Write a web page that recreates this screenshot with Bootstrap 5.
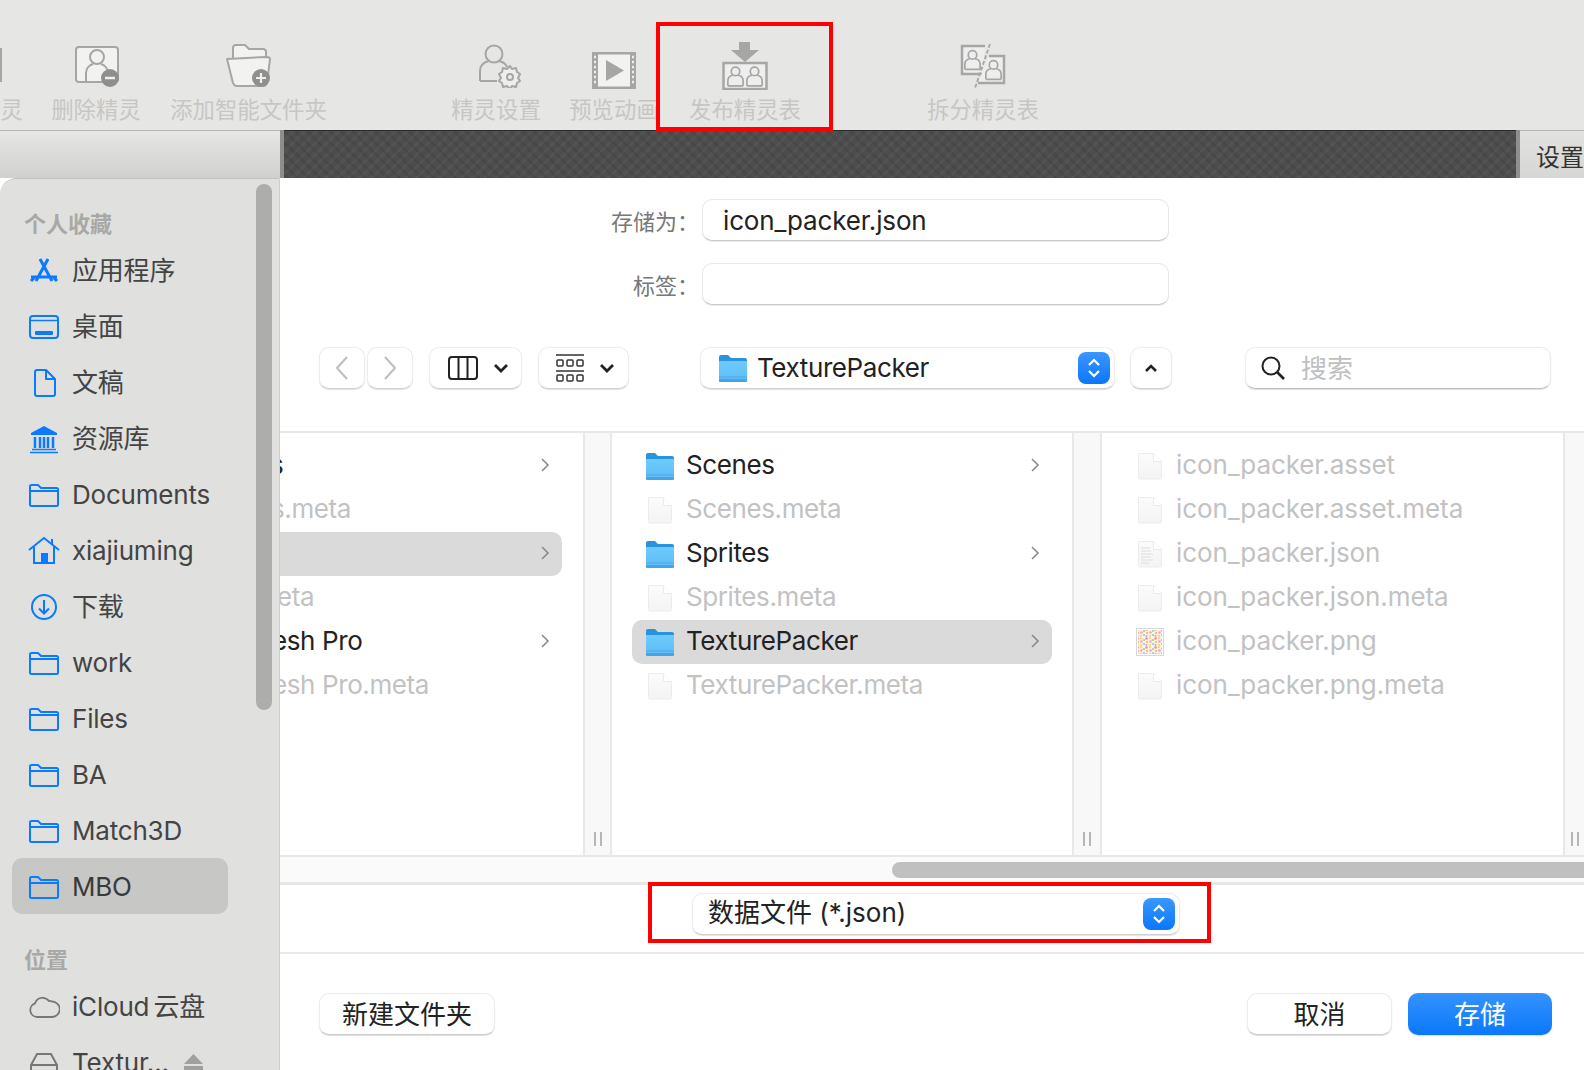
<!DOCTYPE html>
<html lang="zh">
<head>
<meta charset="utf-8">
<title>存储</title>
<link href="https://cdn.jsdelivr.net/npm/bootstrap@5.3.0/dist/css/bootstrap.min.css" rel="stylesheet">
<style>
html,body{margin:0;width:1584px;height:1070px;overflow:hidden;background:#fff}
body{font-family:Inter,"Noto Sans CJK SC",sans-serif;font-size:26px;color:#222}
.app{width:1584px;height:1070px;overflow:hidden}
.mark-box{position:absolute;border:4px solid #f00;pointer-events:none;z-index:5}
.mark-a{left:656px;top:22px;width:177px;height:109px}
.mark-b{left:648px;top:882px;width:563px;height:61px}
/* app toolbar */
.tbar{height:130px;background:#e6e6e4;padding-top:42px;flex:none}
.tb-item{display:flex;flex-direction:column;align-items:center;flex:none}
.tb-ic{height:48px;display:flex;align-items:center;justify-content:center}
.tb-lab{font-size:22.4px;line-height:30px;margin-top:5px;color:#c6c6c4;white-space:nowrap}
.w0{width:23px;align-items:flex-end}.w1{width:88px;margin-left:29px}.w2{width:155px;margin-left:31px}.w3{width:88px;margin-left:126px}
.w4{width:88px;margin-left:30px}.w5{width:110px;margin-left:32px}.w6{width:110px;margin-left:128px}
.frag{width:2px;height:34px;border:2px solid #a5a5a3;border-left:0;align-self:flex-start;margin-top:6px;margin-bottom:8px}
.ic-shift1{margin-left:2px}
.ic-shift2{margin-left:9px}
/* workspace */
.wsp{height:48px;flex:none}
.wsp-l{width:280px;background:linear-gradient(#e6e6e4,#d0d0ce);border-top:1px solid #b4b4b2}
.wsp-sep{width:4px;background:#8e8e8c}
.wsp-m{flex:1;border-top:1px solid #2c2c2c;background-color:#4d4d4d;background-image:repeating-linear-gradient(45deg,rgba(0,0,0,.07) 0 3px,transparent 3px 8px),repeating-linear-gradient(-45deg,rgba(255,255,255,.035) 0 3px,transparent 3px 8px)}
.wsp-r{width:64px;background:linear-gradient(#e2e2e0,#d6d6d4);border-top:1px solid #b4b4b2;padding-left:16px;font-size:24px;line-height:53px;color:#333;white-space:nowrap;overflow:hidden}
/* dialog */
.dlg{flex:1;min-height:0;background:#fff;border-radius:16px 16px 0 0;overflow:hidden;position:relative}
.side{width:280px;flex:none;background:#e0e0de;border-right:1px solid #cdcdcb;position:relative;overflow:hidden;border-top:1px solid #c0c0be;border-top-left-radius:16px;letter-spacing:-.2px}
.side-thumb{position:absolute;left:256px;top:5px;width:16px;height:526px;border-radius:8px;background:#adadab}
.side-h{font-size:22px;font-weight:700;line-height:34px;color:#a8a8a6;padding-left:24px;letter-spacing:0}
.side-h1{margin-top:28px;margin-bottom:1px}
.side-h2{margin-top:29px;margin-bottom:1px}
.side .nav-link{display:flex;align-items:center;height:56px;margin:0 51px 0 12px;padding:0 0 0 60px;color:#444;position:relative;border-radius:10px;white-space:nowrap;word-spacing:-3px}
.side .nav-link.active{background:#c7c7c5;color:#3a3a3a}
.side-ic{position:absolute;left:16px;top:13px;width:32px;height:32px;color:#0a7aff}
.side-ic.grey{color:#777}
.eject{width:19px;height:17px;margin-left:15px;flex:none}
/* main */
.mainp{flex:1;min-width:0;display:flex;flex-direction:column}
.frow{display:flex;align-items:center}
.frow1{margin-top:21px}.frow2{margin-top:22px}
.flab{width:419px;text-align:right;font-size:22px;color:#777;margin-right:3px;padding-top:4px;white-space:nowrap}
.form-control.finp{width:467px;height:42px;padding:2px 0 0 20px;font-size:26px;line-height:38px;color:#222;letter-spacing:-.15px;border:1px solid #e9e9e9;border-bottom-color:#c9c9c9;border-radius:10px;box-shadow:0 1px 0 rgba(0,0,0,.08)}
.nbar{height:42px;margin-top:42px;padding-left:39px;display:flex;align-items:stretch;flex:none}
.pill{background:#fff;border:1px solid #ececec;border-bottom-color:#d0d0d0;border-radius:10px;box-shadow:0 1px 1px rgba(0,0,0,.12);display:flex;align-items:center;flex:none}
.p-back{width:46px;justify-content:center}
.p-fwd{width:46px;margin-left:2px;justify-content:center}
.p-view{width:93px;margin-left:16px;justify-content:center;gap:15px;padding-left:6px}
.p-grid{width:91px;margin-left:16px;justify-content:center;gap:15px;padding-left:4px}
.p-path{width:415px;margin-left:71px;padding-left:17px;color:#222;position:relative;letter-spacing:-.4px}
.p-path .pname{margin-left:9px;padding-bottom:2px}
.stepper{position:absolute;right:4px;top:4px;width:32px;height:32px;border-radius:8px;background:linear-gradient(#3b96ff,#0a78fa);display:flex;align-items:center;justify-content:center}
.p-up{width:42px;margin-left:15px;justify-content:center}
.p-search{width:306px;margin-left:73px;padding-left:14px;color:#c0c0c0;gap:15px;border-bottom-color:#bdbdbd}
/* columns */
.cols{height:424px;margin-top:42px;border-top:2px solid #e8e8e8;display:flex;flex:none;overflow:hidden}
.fcol{flex:none;overflow:hidden}
.c1{width:303px;padding:11px 21px 0 0;letter-spacing:-.4px}.c2{width:460px;padding:11px 20px 0;letter-spacing:-.4px}.c3{width:461px;padding:11px 20px 0;letter-spacing:-.1px}
.gut{flex:none;background:#f8f8f8;border-left:2px solid #e8e8e8;border-right:2px solid #e8e8e8;display:flex;justify-content:center;align-items:flex-end;padding-bottom:9px}
.g1{width:29px}.g2{width:30px}.g3{width:21px;border-right:0}
.hnd{width:8px;height:14px;border-left:2px solid #b6b6b6;border-right:2px solid #b6b6b6}
.frw{height:44px;display:flex;align-items:center;padding:0 0 4px 14px;border-radius:10px;white-space:nowrap;color:#222;position:relative}
.frw.dim{color:#c2c2c2}
.frw.sel{background:#dadada}
.frw svg.fi{width:28px;height:28px;flex:none;margin:4px 12px 0 0}
.frw .chev{position:absolute;right:12px;top:14px;width:10px;height:14px}
.c1 .frw{padding-left:0;border-radius:0 10px 10px 0}
.cut-s{margin-left:-10px}.cut-sm{margin-left:-9px}.cut-e{margin-left:-3px}.cut-h{margin-left:-8px}
/* bottom */
.hsc{height:27px;background:#fafafa;border-top:2px solid #e8e8e8;padding:5px 0 0 612px;flex:none}
.hsc div{height:16px;background:#c0c0c0;border-radius:8px 0 0 8px}
.fmt{height:72px;flex:none;border-top:3px solid #e8e8e8;border-bottom:2px solid #e8e8e8;padding:8px 0 0 412px}
.p-fmt{width:488px;height:42px;padding:0 0 3px 15px;color:#222;position:relative}
.foot{flex:1;padding:39px 32px 0 39px}
.btn.mbtn{height:42px;width:145px;padding:0;font-size:26px;line-height:37px;color:#222;background:#fff;border:1px solid #ececec;border-bottom-color:#cfcfcf;border-radius:10px;box-shadow:0 1px 1px rgba(0,0,0,.14)}
.btn.b-new{width:176px}
.btn.b-save{width:144px;margin-left:16px;color:#fff;border:0;background:linear-gradient(#3593ff,#0a78fa)}
</style>
</head>
<body>
<svg width="0" height="0" class="position-absolute">
  <defs>
    <linearGradient id="fg" x1="0" y1="0" x2="0" y2="1"><stop offset="0" stop-color="#6fcbfd"/><stop offset="1" stop-color="#5cbcf6"/></linearGradient>
    <linearGradient id="pg" x1="0" y1="0" x2="0" y2="1"><stop offset="0" stop-color="#fbfbfb"/><stop offset="1" stop-color="#f4f4f4"/></linearGradient>
    <pattern id="dots" width="9" height="9" patternUnits="userSpaceOnUse">
      <rect width="9" height="9" fill="#fdf3e4"/>
      <circle cx="1.500" cy="1.500" r="1.300" fill="#f48a9c"/><circle cx="5" cy="1" r="1" fill="#f7cf5f"/><circle cx="8" cy="3" r="1.100" fill="#9ed98c"/>
      <circle cx="2" cy="5" r="1.100" fill="#f7b45f"/><circle cx="5.500" cy="4.500" r="1.300" fill="#f8a3c0"/>
      <circle cx="1.500" cy="8" r="1" fill="#b7a6ea"/><circle cx="5" cy="7.800" r="1.100" fill="#f7d772"/><circle cx="8" cy="7" r="1" fill="#88c7ee"/>
    </pattern>
    <symbol id="finder" viewBox="0 0 28 28">
      <path d="M0 3a2 2 0 0 1 2-2h7l3 3h14a2 2 0 0 1 2 2v6H0z" fill="#2a93de"/>
      <path d="M0 8a1 1 0 0 1 1-1h26a1 1 0 0 1 1 1v18a2 2 0 0 1-2 2H2a2 2 0 0 1-2-2z" fill="url(#fg)"/>
      <path d="M0 23h28" stroke="#4aa8e6" stroke-width="1"/><path d="M0 26.500h28" stroke="#3f98d8" stroke-width="3" stroke-opacity=".7"/>
    </symbol>
    <symbol id="pfile" viewBox="0 0 28 28">
      <path d="M2.500 1.500h15l8 8v16a1.500 1.500 0 0 1-1.500 1.500H4a1.500 1.500 0 0 1-1.500-1.500z" fill="url(#pg)" stroke="#ececec"/>
      <path d="M17.500 1.500v8h8" fill="#fff" stroke="#ececec"/>
    </symbol>
    <symbol id="sfolder" viewBox="0 0 32 32">
      <path d="M2 10V7.500A1.500 1.500 0 0 1 3.500 6H10l3 3h15.500A1.500 1.500 0 0 1 30 10.500v15a1.500 1.500 0 0 1-1.500 1.500h-25A1.500 1.500 0 0 1 2 25.500zM2 12h28" fill="none" stroke="currentColor" stroke-width="2"/>
    </symbol>
    <symbol id="dome" viewBox="0 0 20 24">
      <circle cx="10" cy="6" r="5" fill="none" stroke="#a6a6a4" stroke-width="2"/>
      <path d="M1 23v-6c0-4 3-6 6-6.500M19 23v-6c0-4-3-6-6-6.500M1 23h18" fill="none" stroke="#a6a6a4" stroke-width="2"/>
    </symbol>
  </defs>
</svg>

<div class="app position-relative d-flex flex-column">
  <div class="mark-box mark-a"></div>
  <div class="mark-box mark-b"></div>

  <div class="tbar d-flex">
    <div class="tb-item w0"><div class="frag"></div><div class="tb-lab">灵</div></div>
    <div class="tb-item w1">
      <div class="tb-ic"><svg class="ic-shift1" width="46" height="42" viewBox="0 0 46 42"><rect x="2" y="2" width="42" height="35" rx="3" fill="#f2f2f0" stroke="#a6a6a4" stroke-width="2"/><circle cx="23" cy="12" r="7" fill="none" stroke="#a6a6a4" stroke-width="2"/><path d="M12 36v-8c0-5 4-8 7-9M34 36v-8c0-5-4-8-7-9" fill="none" stroke="#a6a6a4" stroke-width="2"/><circle cx="36" cy="33" r="9" fill="#8f8f8d"/><path d="M31 33h10" stroke="#eee" stroke-width="2.500"/></svg></div>
      <div class="tb-lab">删除精灵</div>
    </div>
    <div class="tb-item w2">
      <div class="tb-ic"><svg width="46" height="44" viewBox="0 0 46 44"><path d="M7 14V4q0-3 3-3h9l4 4h14q3 0 3 3v6" fill="#f2f2f0" stroke="#a6a6a4" stroke-width="2"/><path d="M1 15l39-2q4 0 4 2l-3 24q-1 3-4 3H11q-3 0-4-3z" fill="#f2f2f0" stroke="#a6a6a4" stroke-width="2" stroke-linejoin="round"/><circle cx="35" cy="34" r="9" fill="#8f8f8d"/><path d="M30 34h10M35 29v10" stroke="#eee" stroke-width="2.200"/></svg></div>
      <div class="tb-lab">添加智能文件夹</div>
    </div>
    <div class="tb-item w3">
      <div class="tb-ic"><svg class="ic-shift2" width="44" height="44" viewBox="0 0 44 44"><circle cx="15" cy="10" r="8.500" fill="none" stroke="#a6a6a4" stroke-width="2"/><path d="M1 37V27c0-6 5-9 9-10M20 17c4 1 7 3 8 6M1 37h17" fill="none" stroke="#a6a6a4" stroke-width="2"/><path d="M31 22l2 3 4-1 1 4 3 2-2 4 2 3-3 2-1 4-4-1-2 3-3-3-4 1-1-4-3-2 2-3-2-4 3-2 1-4 4 1z" fill="#eee" stroke="#a6a6a4" stroke-width="2" stroke-linejoin="round"/><circle cx="31" cy="33" r="3" fill="none" stroke="#a6a6a4" stroke-width="2"/></svg></div>
      <div class="tb-lab">精灵设置</div>
    </div>
    <div class="tb-item w4">
      <div class="tb-ic"><svg width="44" height="37" viewBox="0 0 44 37" class="mt-2"><rect width="44" height="37" fill="#a6a6a4"/><rect x="6" y="2.500" width="32" height="32" fill="#f2f2f0"/><path d="M2 5h2M2 10h2M2 15h2M2 20h2M2 25h2M2 30h2M40 5h2M40 10h2M40 15h2M40 20h2M40 25h2M40 30h2" stroke="#eee" stroke-width="2.500"/><path d="M14 8l18 10.500L14 29z" fill="#a6a6a4"/></svg></div>
      <div class="tb-lab">预览动画</div>
    </div>
    <div class="tb-item w5">
      <div class="tb-ic"><svg width="46" height="48" viewBox="0 0 46 48"><path d="M17 0h11v8h9L23 20 9 8h8z" fill="#a6a6a4"/><rect x="1.500" y="21" width="43" height="26" fill="#eee" stroke="#a6a6a4" stroke-width="2.500"/><use href="#dome" x="5" y="24" width="17" height="21"/><use href="#dome" x="24" y="24" width="17" height="21"/></svg></div>
      <div class="tb-lab">发布精灵表</div>
    </div>
    <div class="tb-item w6">
      <div class="tb-ic"><svg width="46" height="44" viewBox="0 0 46 44"><path d="M25 2H2v28h20" fill="#eee" stroke="#a6a6a4" stroke-width="2.500"/><path d="M29 12h15v27H18" fill="#eee" stroke="#a6a6a4" stroke-width="2.500"/><use href="#dome" x="4" y="5" width="17" height="22"/><use href="#dome" x="25" y="15" width="17" height="22"/><path d="M30 0L15 44" stroke="#a6a6a4" stroke-width="1.800" stroke-dasharray="4 2"/></svg></div>
      <div class="tb-lab">拆分精灵表</div>
    </div>
  </div>

  <div class="wsp d-flex">
    <div class="wsp-l"></div><div class="wsp-sep"></div><div class="wsp-m"></div><div class="wsp-sep"></div><div class="wsp-r">设置</div>
  </div>

  <div class="dlg d-flex">
    <aside class="side">
      <div class="side-thumb"></div>
      <div class="side-h side-h1">个人收藏</div>
      <nav class="nav flex-column">
        <a class="nav-link" href="#"><svg class="side-ic" viewBox="0 0 32 32"><path d="M12 4l12 22M20 4L8 26M3 22h26" fill="none" stroke="currentColor" stroke-width="3"/><path d="M3 26l3-3M29 26l-3-3" stroke="currentColor" stroke-width="3"/></svg>应用程序</a>
        <a class="nav-link" href="#"><svg class="side-ic" viewBox="0 0 32 32"><rect x="2" y="5" width="28" height="22" rx="3" fill="none" stroke="currentColor" stroke-width="2"/><path d="M2 9.500h28" stroke="currentColor" stroke-width="1.500"/><rect x="7" y="20" width="18" height="4" rx="1" fill="currentColor"/></svg>桌面</a>
        <a class="nav-link" href="#"><svg class="side-ic" viewBox="0 0 32 32"><path d="M9 3h9l9 9v15a2 2 0 0 1-2 2H9a2 2 0 0 1-2-2V5a2 2 0 0 1 2-2zM18 3v9h9" fill="none" stroke="currentColor" stroke-width="2" stroke-linejoin="round"/></svg>文稿</a>
        <a class="nav-link" href="#"><svg class="side-ic" viewBox="0 0 32 32"><path d="M16 3L3 10v2h26v-2z" fill="currentColor"/><path d="M7 14v11M12 14v11M20 14v11M25 14v11M16 14v11" stroke="currentColor" stroke-width="2.500"/><path d="M4 26.500h24M2 29.500h28" stroke="currentColor" stroke-width="1.600"/></svg>资源库</a>
        <a class="nav-link" href="#"><svg class="side-ic"><use href="#sfolder"/></svg>Documents</a>
        <a class="nav-link" href="#"><svg class="side-ic" viewBox="0 0 32 32"><path d="M1 15L16 3l15 12M6 12v16h20V12M24 4v6" fill="none" stroke="currentColor" stroke-width="2"/><rect x="13" y="18" width="7" height="10" fill="currentColor"/></svg>xiajiuming</a>
        <a class="nav-link" href="#"><svg class="side-ic" viewBox="0 0 32 32"><circle cx="16" cy="16" r="12" fill="none" stroke="currentColor" stroke-width="2"/><path d="M16 9v13M11 17.500l5 5 5-5" fill="none" stroke="currentColor" stroke-width="2"/></svg>下载</a>
        <a class="nav-link" href="#"><svg class="side-ic"><use href="#sfolder"/></svg>work</a>
        <a class="nav-link" href="#"><svg class="side-ic"><use href="#sfolder"/></svg>Files</a>
        <a class="nav-link" href="#"><svg class="side-ic"><use href="#sfolder"/></svg>BA</a>
        <a class="nav-link" href="#"><svg class="side-ic"><use href="#sfolder"/></svg>Match3D</a>
        <a class="nav-link active" href="#"><svg class="side-ic"><use href="#sfolder"/></svg>MBO</a>
      </nav>
      <div class="side-h side-h2">位置</div>
      <nav class="nav flex-column">
        <a class="nav-link" href="#"><svg class="side-ic grey" viewBox="0 0 32 32"><path d="M9 26a7 7 0 0 1-2-13.600A8 8 0 0 1 21 10a6 6 0 0 1 3 .5A7.500 7.500 0 0 1 24 26z" fill="none" stroke="currentColor" stroke-width="1.800"/></svg>iCloud 云盘</a>
        <a class="nav-link" href="#"><svg class="side-ic grey" viewBox="0 0 32 32"><path d="M9 7h14l6 11v8a2 2 0 0 1-2 2H5a2 2 0 0 1-2-2v-8zM3 18h26" fill="none" stroke="currentColor" stroke-width="2"/></svg>Textur...<svg class="eject" viewBox="0 0 19 17"><path d="M9.500 0L19 10H0z" fill="#a0a0a0"/><rect y="12" width="19" height="5" fill="#a0a0a0"/></svg></a>
      </nav>
    </aside>

    <section class="mainp">
      <div class="frow frow1"><div class="flab">存储为：</div><div class="form-control finp">icon_packer.json</div></div>
      <div class="frow frow2"><div class="flab">标签：</div><div class="form-control finp"></div></div>

      <div class="nbar">
        <div class="pill p-back"><svg width="16" height="26" viewBox="0 0 16 26"><path d="M13 2L3 13l10 11" fill="none" stroke="#bdbdbd" stroke-width="2"/></svg></div>
        <div class="pill p-fwd"><svg width="16" height="26" viewBox="0 0 16 26"><path d="M3 2l10 11L3 24" fill="none" stroke="#bdbdbd" stroke-width="2"/></svg></div>
        <div class="pill p-view"><svg width="30" height="24" viewBox="0 0 30 24"><rect x="1" y="1" width="28" height="22" rx="3" fill="none" stroke="#222" stroke-width="2"/><path d="M10.500 1v22M19.500 1v22" stroke="#222" stroke-width="2"/></svg><svg width="16" height="10" viewBox="0 0 16 10"><path d="M2 2l6 6 6-6" fill="none" stroke="#222" stroke-width="2.800"/></svg></div>
        <div class="pill p-grid"><svg width="28" height="28" viewBox="0 0 28 28"><path d="M0 1h28M0 17h28" stroke="#333" stroke-width="1.500"/><g fill="none" stroke="#333" stroke-width="1.500"><rect x="1" y="6" width="6" height="6" rx="1"/><rect x="11" y="6" width="6" height="6" rx="1"/><rect x="21" y="6" width="6" height="6" rx="1"/><rect x="1" y="21" width="6" height="6" rx="1"/><rect x="11" y="21" width="6" height="6" rx="1"/><rect x="21" y="21" width="6" height="6" rx="1"/></g></svg><svg width="16" height="10" viewBox="0 0 16 10"><path d="M2 2l6 6 6-6" fill="none" stroke="#222" stroke-width="2.800"/></svg></div>
        <div class="pill p-path"><svg width="30" height="28" viewBox="0 0 28 28"><use href="#finder"/></svg><span class="pname">TexturePacker</span><div class="stepper"><svg width="16" height="26" viewBox="0 0 16 26"><path d="M3 10l5-5 5 5M3 16l5 5 5-5" fill="none" stroke="#fff" stroke-width="2.200"/></svg></div></div>
        <div class="pill p-up"><svg width="14" height="9" viewBox="0 0 14 9"><path d="M2 7l5-5 5 5" fill="none" stroke="#222" stroke-width="2.600"/></svg></div>
        <div class="pill p-search"><svg width="26" height="26" viewBox="0 0 26 26"><circle cx="11" cy="11" r="8.500" fill="none" stroke="#222" stroke-width="2"/><path d="M17 17l7 7" stroke="#222" stroke-width="2.600"/></svg><span>搜索</span></div>
      </div>

      <div class="cols">
        <div class="fcol c1">
          <div class="frw"><span class="cut-s">s</span><svg class="chev" viewBox="0 0 10 14"><path d="M2 1l6 6-6 6" fill="none" stroke="#8a8a8a" stroke-width="1.600"/></svg></div>
          <div class="frw dim"><span class="cut-sm">s.meta</span></div>
          <div class="frw sel"><svg class="chev" viewBox="0 0 10 14"><path d="M2 1l6 6-6 6" fill="none" stroke="#8a8a8a" stroke-width="1.600"/></svg></div>
          <div class="frw dim"><span class="cut-e">eta</span></div>
          <div class="frw"><span class="cut-h">esh Pro</span><svg class="chev" viewBox="0 0 10 14"><path d="M2 1l6 6-6 6" fill="none" stroke="#8a8a8a" stroke-width="1.600"/></svg></div>
          <div class="frw dim"><span class="cut-h">esh Pro.meta</span></div>
        </div>
        <div class="gut g1"><div class="hnd"></div></div>
        <div class="fcol c2">
          <div class="frw"><svg class="fi"><use href="#finder"/></svg>Scenes<svg class="chev" viewBox="0 0 10 14"><path d="M2 1l6 6-6 6" fill="none" stroke="#8a8a8a" stroke-width="1.600"/></svg></div>
          <div class="frw dim"><svg class="fi"><use href="#pfile"/></svg>Scenes.meta</div>
          <div class="frw"><svg class="fi"><use href="#finder"/></svg>Sprites<svg class="chev" viewBox="0 0 10 14"><path d="M2 1l6 6-6 6" fill="none" stroke="#8a8a8a" stroke-width="1.600"/></svg></div>
          <div class="frw dim"><svg class="fi"><use href="#pfile"/></svg>Sprites.meta</div>
          <div class="frw sel"><svg class="fi"><use href="#finder"/></svg>TexturePacker<svg class="chev" viewBox="0 0 10 14"><path d="M2 1l6 6-6 6" fill="none" stroke="#8a8a8a" stroke-width="1.600"/></svg></div>
          <div class="frw dim"><svg class="fi"><use href="#pfile"/></svg>TexturePacker.meta</div>
        </div>
        <div class="gut g2"><div class="hnd"></div></div>
        <div class="fcol c3">
          <div class="frw dim"><svg class="fi"><use href="#pfile"/></svg>icon_packer.asset</div>
          <div class="frw dim"><svg class="fi"><use href="#pfile"/></svg>icon_packer.asset.meta</div>
          <div class="frw dim"><svg class="fi" viewBox="0 0 28 28"><use href="#pfile"/><path d="M5 8h9M5 11h10M5 14h12M5 17h10M5 20h12M5 23h8" stroke="#dedede" stroke-width="1"/></svg>icon_packer.json</div>
          <div class="frw dim"><svg class="fi"><use href="#pfile"/></svg>icon_packer.json.meta</div>
          <div class="frw dim"><svg class="fi" viewBox="0 0 28 28"><rect x="0.500" y="0.500" width="27" height="27" fill="#fff" stroke="#d8d8d8"/><rect x="2" y="2" width="24" height="24" fill="url(#dots)"/></svg>icon_packer.png</div>
          <div class="frw dim"><svg class="fi"><use href="#pfile"/></svg>icon_packer.png.meta</div>
        </div>
        <div class="gut g3"><div class="hnd"></div></div>
      </div>

      <div class="hsc"><div></div></div>
      <div class="fmt">
        <div class="pill p-fmt">数据文件 (*.json)<div class="stepper"><svg width="16" height="26" viewBox="0 0 16 26"><path d="M3 10l5-5 5 5M3 16l5 5 5-5" fill="none" stroke="#fff" stroke-width="2.200"/></svg></div></div>
      </div>
      <div class="foot d-flex justify-content-between">
        <button type="button" class="btn mbtn b-new">新建文件夹</button>
        <div class="d-flex"><button type="button" class="btn mbtn">取消</button><button type="button" class="btn mbtn b-save">存储</button></div>
      </div>
    </section>
  </div>
</div>
<script src="https://cdn.jsdelivr.net/npm/bootstrap@5.3.0/dist/js/bootstrap.bundle.min.js"></script>
</body>
</html>
